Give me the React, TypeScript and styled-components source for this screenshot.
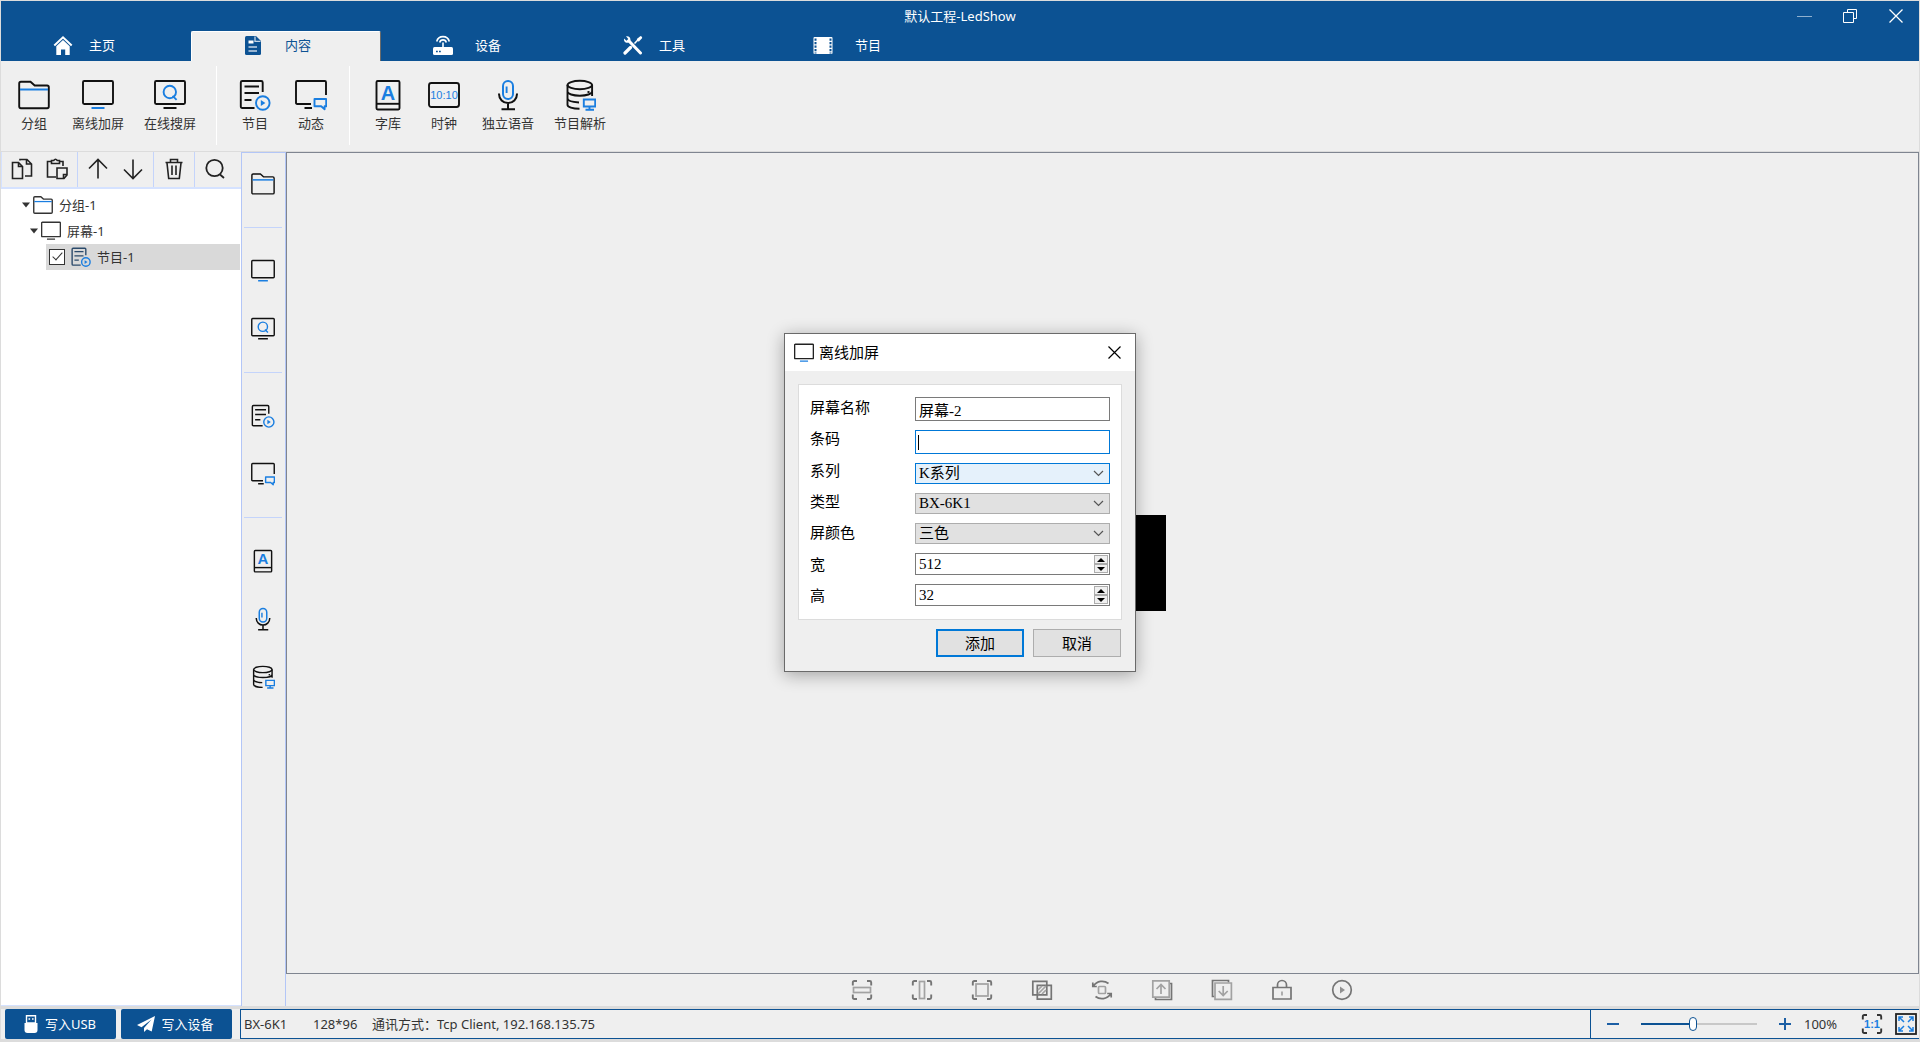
import React, { useState } from 'react';
import styled, { createGlobalStyle, css } from 'styled-components';

const UI = `"Noto Sans", "Noto Sans CJK SC", sans-serif`;
const SONG = `"Liberation Serif", "Noto Sans CJK SC", serif`;
const BLUE = '#0c5293';
const ACCENT = '#1a7ee0';
const FACE = '#efefef';

const GlobalStyle = createGlobalStyle`
  *, *::before, *::after { box-sizing: border-box; }
  body { margin: 0; background: ${FACE}; font-family: ${UI}; font-size: 13px; color: #333; }
  button, input, select { font: inherit; color: inherit; margin: 0; }
  button { padding: 0; border: 0; background: none; }
  svg { display: block; flex: none; }
`;

/* ---------- layout ---------- */

const Shell = styled.div`
  display: flex;
  flex-direction: column;
  min-height: 100vh;
  border: 1px solid #dcdcdc;
  border-bottom-width: 3px;
  background: ${FACE};
`;

const Header = styled.header`
  background: ${BLUE};
  color: #fff;
`;

const TitleBar = styled.div`
  display: grid;
  grid-template-columns: 1fr auto 1fr;
  align-items: center;
  height: 30px;
`;

const AppTitle = styled.h1`
  grid-column: 2;
  margin: 0;
  font-size: 13px;
  font-weight: 400;
  line-height: 30px;
`;

const WindowButtons = styled.div`
  display: flex;
  justify-content: flex-end;
`;

const WindowButton = styled.button`
  display: flex;
  align-items: center;
  justify-content: center;
  width: 46px;
  height: 30px;
`;

const TabStrip = styled.nav`
  display: flex;
`;

const Tab = styled.button<{ $active?: boolean; $tight?: boolean }>`
  display: flex;
  align-items: center;
  gap: ${p => (p.$tight ? 16 : 22)}px;
  width: 190px;
  height: 30px;
  padding: 0 0 2px 52px;
  ${p => p.$active && css`
    padding: 0 0 3px 51px;
    background: ${FACE};
    color: ${BLUE};
    border: solid #fff;
    border-width: 1px 0 0 1px;
    border-right: 1px solid #6b6b6b;
    border-radius: 2px 2px 0 0;
  `}
`;

const TabName = styled.span`
  padding-bottom: 2px;
`;

const Ribbon = styled.div`
  display: flex;
  height: 91px;
  padding: 5px 5px 6px;
  border-bottom: 1px solid #dcdcdc;
`;

const RibbonButton = styled.button`
  display: flex;
  flex-direction: column;
  align-items: center;
  gap: 2px;
  min-width: 56px;
  padding: 13px 10px 0;
  line-height: 20px;
`;

const RibbonRule = styled.div`
  width: 1px;
  margin: 0 10px;
  background: #fff;
`;

const Workspace = styled.main`
  display: flex;
  flex: 1;
`;

const Sidebar = styled.aside`
  display: flex;
  flex-direction: column;
  width: 240px;
  background: #fff;
  border-bottom: 1px solid #d5e2ff;
`;

const SideTools = styled.div`
  display: flex;
  height: 37px;
  background: ${FACE};
  border-left: 1px solid #d5e2ff;
  border-bottom: 2px solid #d5e2ff;
`;

const ToolGroup = styled.div`
  display: flex;
  align-items: center;
  gap: 11px;
  padding: 0 8px 2px;
  & + & { border-left: 1px solid #c4d4fb; }
`;

const ToolButton = styled.button`
  width: 24px;
  height: 24px;
`;

const Tree = styled.ul`
  list-style: none;
  margin: 0;
  padding: 3px 1px 0 0;
`;

const TreeRow = styled.li<{ $indent: number; $selected?: boolean }>`
  display: flex;
  align-items: center;
  height: 26px;
  margin-left: ${p => p.$indent}px;
  padding-left: ${p => (p.$selected ? 3 : 0)}px;
  background: ${p => (p.$selected ? '#d9d9d9' : 'transparent')};
  svg + svg { margin-left: 3px; }
  input + svg { margin-left: 6px; }
`;

const nodeName = css`
  margin-left: 6px;
  padding-bottom: 2px;
`;

const NodeName = styled.span`${nodeName}`;
const NodeLabel = styled.label`${nodeName}`;

const Check = styled.input`
  appearance: none;
  width: 16px;
  height: 16px;
  border: 1px solid #333;
  background: #fff;
  &:checked::after {
    content: '';
    display: block;
    width: 5px;
    height: 10px;
    margin: 0 auto;
    border: solid #333;
    border-width: 0 1px 1px 0;
    transform: rotate(42deg);
  }
`;

const Rail = styled.div`
  display: flex;
  flex-direction: column;
  width: 45px;
  padding-top: 2px;
  border: 1px solid #b3c6f7;
  border-bottom: 0;
`;

const RailGroup = styled.div`
  display: flex;
  flex-direction: column;
  margin: 0 3px 0 2px;
  & + & {
    margin-top: 14px;
    padding-top: 14px;
    border-top: 1px solid #c4d4fb;
  }
`;

const RailButton = styled.button`
  display: flex;
  align-items: center;
  justify-content: center;
  height: 58px;
`;

const Stage = styled.section`
  display: flex;
  flex: 1;
  flex-direction: column;
`;

const Canvas = styled.div`
  display: flex;
  flex: 1;
  align-items: center;
  justify-content: center;
  padding-right: 1px;
  border: 1px solid #7f8590;
`;

const LedScreen = styled.div`
  width: 128px;
  height: 96px;
  background: #000;
`;

const ArrangeBar = styled.div`
  display: flex;
  justify-content: center;
  gap: 38px;
  height: 32px;
  padding-right: 1px;
`;

const ArrangeButton = styled.button`
  display: flex;
  align-items: center;
  justify-content: center;
  width: 22px;
`;

const Footer = styled.footer`
  display: flex;
  height: 33px;
  padding-left: 4px;
  border-top: 3px solid #dcdcdc;
`;

const WriteButtons = styled.div`
  display: flex;
  gap: 5px;
  width: 235px;
`;

const WriteButton = styled.button`
  display: flex;
  align-items: center;
  justify-content: center;
  gap: 6px;
  width: 111px;
  height: 30px;
  padding-right: 2px;
  border-radius: 2px;
  background: ${BLUE};
  color: #fff;
`;

const WriteName = styled.span`
  padding-bottom: 2px;
`;

const Status = styled.div`
  display: flex;
  flex: 1;
  align-items: center;
  padding: 0 2px 0 3px;
  border: 1px solid ${BLUE};
  border-right: 0;
`;

const StatusItem = styled.span<{ $width?: number }>`
  width: ${p => (p.$width ? `${p.$width}px` : 'auto')};
  line-height: 18px;
  padding-bottom: 1px;
  white-space: nowrap;
`;

const Zoom = styled.div`
  display: flex;
  align-items: center;
  height: 28px;
  margin-left: auto;
  padding-left: 16px;
  border-left: 1px solid ${BLUE};
`;

const ZoomSlider = styled.input`
  appearance: none;
  width: 116px;
  height: 14px;
  margin: 0 22px;
  background: linear-gradient(to right, ${BLUE} 44%, #c8c8c8 44%) center / 100% 2px no-repeat;
  &::-webkit-slider-thumb {
    appearance: none;
    width: 8px;
    height: 14px;
    border: 1px solid ${BLUE};
    border-radius: 4px;
    background: #fff;
  }
`;

const ZoomValue = styled.output`
  width: 57px;
  margin-left: 13px;
`;

const ViewButton = styled.button`
  width: 22px;
  height: 22px;
  & + & { margin-left: 12px; }
`;

/* ---------- dialog ---------- */

const Overlay = styled.div`
  position: absolute;
  inset: 0;
  display: flex;
  align-items: flex-start;
  justify-content: center;
  padding-top: 333px;
`;

const DialogBox = styled.div`
  width: 352px;
  border: 1px solid #6a6a6a;
  background: ${FACE};
  box-shadow: 0 3px 16px rgba(0, 0, 0, 0.32);
  font-family: ${SONG};
  font-size: 15px;
  color: #000;
`;

const DialogHeader = styled.div`
  display: flex;
  align-items: center;
  gap: 5px;
  height: 37px;
  padding: 0 6px 0 9px;
  background: #fff;
`;

const DialogTitle = styled.h2`
  flex: 1;
  margin: 0;
  padding-bottom: 2px;
  font-family: ${UI};
  font-size: 15px;
  font-weight: 400;
`;

const CloseButton = styled.button`
  display: flex;
  align-items: center;
  justify-content: center;
  width: 30px;
  height: 30px;
`;

const DialogForm = styled.form`
  padding: 13px 13px 14px;
`;

const Fields = styled.div`
  display: grid;
  grid-template-columns: 1fr 195px;
  padding: 12px 11px 13px;
  border: 1px solid #dcdcdc;
  background: #fff;
`;

const Labels = styled.div`
  display: flex;
  flex-direction: column;
  justify-content: space-between;
  padding-top: 1px;
  line-height: 20px;
`;

const Controls = styled.div`
  display: flex;
  flex-direction: column;
  gap: 9px;
`;

const TextField = styled.div<{ $active?: boolean }>`
  position: relative;
  height: 24px;
  border: 1px solid ${p => (p.$active ? '#0078d7' : '#7a7a7a')};
  ${p => p.$active && css`
    &::after {
      content: '';
      position: absolute;
      left: 2px;
      top: 4px;
      width: 1px;
      height: 15px;
      background: #000;
    }
  `}
`;

const Entry = styled.input`
  display: block;
  width: 100%;
  height: 100%;
  padding: 0 3px;
  border: 0;
  outline: 0;
  background: none;
  caret-color: transparent;
  appearance: textfield;
  &::-webkit-inner-spin-button { appearance: none; }
`;

const Picker = styled.div<{ $active?: boolean }>`
  display: grid;
  align-items: center;
  height: 21px;
  border: 1px solid ${p => (p.$active ? '#0078d7' : '#adadad')};
  background: ${p => (p.$active ? '#e5f1fb' : '#e1e1e1')};
  select, svg { grid-area: 1 / 1; }
  svg { justify-self: end; margin-right: 5px; pointer-events: none; }
`;

const Choice = styled.select`
  appearance: none;
  width: 100%;
  height: 19px;
  padding: 0 3px;
  border: 0;
  outline: 0;
  background: none;
  line-height: 19px;
`;

const NumberField = styled.div`
  display: flex;
  height: 22px;
  padding-right: 1px;
  border: 1px solid #7a7a7a;
`;

const Steppers = styled.div`
  display: flex;
  flex-direction: column;
  padding: 1px 0;
`;

const Stepper = styled.button`
  display: flex;
  align-items: center;
  justify-content: center;
  width: 14px;
  height: 9px;
  border: 1px solid #adadad;
  background: #f0f0f0;
`;

const Actions = styled.div`
  display: flex;
  justify-content: flex-end;
  gap: 9px;
  margin-top: 9px;
  padding-right: 1px;
`;

const ActionButton = styled.button<{ $primary?: boolean }>`
  width: 88px;
  height: 28px;
  padding-bottom: 2px;
  border: ${p => (p.$primary ? '2px solid #0078d7' : '1px solid #adadad')};
  background: #e1e1e1;
`;

/* ---------- icons ---------- */

type IconProps = { size?: number; ink?: string; accent?: string };

const Big = ({ size = 32, ink = '#111', children }: IconProps & { children: React.ReactNode }) => (
  <svg width={size} height={size} viewBox="0 0 32 32" fill="none" stroke={ink} strokeWidth={size < 24 ? 2.2 : 1.9} aria-hidden="true">
    {children}
  </svg>
);

const FolderIcon = (p: IconProps) => (
  <Big {...p}>
    <path d="M1.2 27.5V4.4q0-1.7 1.7-1.7h9.6l4.2 3.8h12.4q1.7 0 1.7 1.7v19.3q0 1.7-1.7 1.7H2.9q-1.7 0-1.7-1.7z" />
    <path d="M2 10.5h28" stroke={ACCENT} strokeWidth="2" />
  </Big>
);

const MonitorIcon = ({ accent = ACCENT, ...p }: IconProps) => (
  <Big {...p}>
    <rect x="1" y="2" width="30" height="23" rx="1.2" />
    <path d="M9.5 29h13" stroke={accent} strokeWidth="2" />
  </Big>
);

const SearchScreenIcon = (p: IconProps) => (
  <Big {...p}>
    <rect x="1" y="2" width="30" height="23" rx="1.2" />
    <path d="M9.5 29h13" strokeWidth="2" />
    <circle cx="15.8" cy="13" r="6.2" stroke={ACCENT} />
    <path d="M18.6 16.8l4 4" stroke={ACCENT} />
  </Big>
);

const ProgramIcon = (p: IconProps) => (
  <Big {...p}>
    <path d="M15.5 29H3.3Q1.8 29 1.8 27.5V3.5Q1.8 2 3.3 2h18.9q1.5 0 1.5 1.5V13" />
    <path d="M5.5 7.5h14.5M5.5 14h14.5M5.5 21h7" strokeWidth="2" />
    <circle cx="23.8" cy="24" r="6.8" stroke={ACCENT} />
    <path d="M21.8 21v6l4.6-3z" fill={ACCENT} stroke="none" />
  </Big>
);

const DynamicIcon = (p: IconProps) => (
  <Big {...p}>
    <path d="M16 25H2.2Q1 25 1 23.8V3.2Q1 2 2.2 2h27.6Q31 2 31 3.2V16" />
    <path d="M9.5 29h7.5" strokeWidth="2" />
    <path d="M19.5 20h11.7v7.3h-1.6v3l-3.4-3h-6.7z" stroke={ACCENT} strokeLinejoin="round" />
  </Big>
);

const Glyph = styled.text`
  font-family: "Liberation Sans", sans-serif;
  font-weight: 700;
  fill: ${ACCENT};
  stroke: none;
`;

const DigitGlyph = styled(Glyph)`
  font-weight: 400;
`;

const FontIcon = (p: IconProps) => (
  <Big {...p}>
    <rect x="4.5" y="2" width="23" height="28.5" rx="1.2" />
    <path d="M4.5 24.8h23" />
    <Glyph x="16" y="20.5" fontSize="20" textAnchor="middle">A</Glyph>
  </Big>
);

const ClockIcon = (p: IconProps) => (
  <Big {...p}>
    <rect x="1" y="4" width="30" height="24" rx="2.4" />
    <DigitGlyph x="16" y="20" fontSize="11" textAnchor="middle">10:10</DigitGlyph>
  </Big>
);

const MicIcon = (p: IconProps) => (
  <Big {...p}>
    <rect x="11" y="2" width="10" height="18" rx="5" stroke={ACCENT} strokeWidth="2" />
    <path d="M14.6 7.5v6.5" stroke={ACCENT} />
    <path d="M7 14.5v.6a9 9 0 0 0 18 0v-.6M16 24.2V30M9.5 30.2h13.5" strokeWidth="2" />
  </Big>
);

const DatabaseIcon = (p: IconProps) => (
  <Big {...p}>
    <ellipse cx="15.8" cy="6" rx="12.3" ry="4.2" />
    <path d="M3.5 6v20c0 1.8 5 3.7 12 3.8M28.1 6v11M3.5 12.5c0 2.4 5.5 4.2 12.3 4.2s12.3-1.8 12.3-4.2M3.5 19.3c0 2 4 3.8 11.5 4.2" />
    <path d="M23.5 13h2" />
    <path d="M19.8 20.5h11.4v7H19.8zM25.5 27.5v3M21.5 30.7h8.5" stroke={ACCENT} />
  </Big>
);

const Line = ({ children }: { children: React.ReactNode }) => (
  <svg width="24" height="24" viewBox="0 0 24 24" fill="none" stroke="#222" strokeWidth="1.6" aria-hidden="true">
    {children}
  </svg>
);

const CopyIcon = () => (
  <Line>
    <path d="M2.5 5.500h6l4 4v12h-10zM8.500 5.500v4h4M10 3.500V2.500h7l4.500 4.500v12H15M16.500 2.500V7h5" />
  </Line>
);

const PasteIcon = () => (
  <Line>
    <path d="M11 20H2.500V4.500h4M14.500 4.500h3.500V9" />
    <path d="M6.500 3.500h2.200q1.800-2.500 3.600 0h2.200v3h-8z" />
    <path d="M12 11h10v7l-3 3.500h-7zM22 17.500h-3.500v4" />
  </Line>
);

const UpIcon = () => <Line><path d="M12 21.500V2.800M3 11.500l9-9 9 9" /></Line>;
const DownIcon = () => <Line><path d="M12 2.500v18.700M3 12.500l9 9 9-9" /></Line>;

const TrashIcon = () => (
  <Line>
    <path d="M3.500 5.500h17M8.500 5V2.500h7V5M5 6l1.700 15.500h10.600L19 6M10 8.500v9.500M14 8.500v9.500" />
  </Line>
);

const FindIcon = () => (
  <Line><circle cx="11.500" cy="11" r="8.200" strokeWidth="1.800" /><path d="M17 17.500l4 3.500" strokeWidth="1.800" /></Line>
);

const Caret = () => (
  <svg width="8" height="6" viewBox="0 0 8 6" aria-hidden="true"><path d="M0 .5h8L4 5.500z" fill="#333" /></svg>
);

const HomeIcon = () => (
  <svg width="20" height="20" viewBox="0 0 20 20" aria-hidden="true">
    <path d="M1.300 10.500L10 2.300l8.700 8.200" fill="none" stroke="#fff" strokeWidth="2" />
    <path d="M3.300 11.300L10 5l6.700 6.300V20h-4.500v-5.500H8V20H3.300z" fill="#fff" />
  </svg>
);

const PageIcon = () => (
  <svg width="20" height="20" viewBox="0 0 20 20" aria-hidden="true">
    <path d="M3.500 1h9.500l5 5v12.500q0 1.500-1.500 1.500h-13Q2 20 2 18.500v-16Q2 1 3.500 1z" fill={BLUE} />
    <path d="M12 1.500v4.800h5.500M5.500 12h8.500M5.500 16h8.500" fill="none" stroke="#c5d5e6" strokeWidth="1.300" />
    <path d="M5.500 5.500h5v3h-5z" fill="#fff" />
  </svg>
);

const RouterIcon = () => (
  <svg width="20" height="20" viewBox="0 0 20 20" fill="none" stroke="#fff" strokeWidth="1.600" aria-hidden="true">
    <path d="M3.700 6.500a6.500 6.500 0 0 1 12.600 0M6.700 7.500a3.400 3.400 0 0 1 6.600 0M10 7.500v5" />
    <path d="M1.500 12h17q1.500 0 1.500 1.500v5q0 1.500-1.500 1.500h-17Q0 20 0 18.500v-5Q0 12 1.500 12z" fill="#fff" stroke="none" />
    <path d="M3 16.500h1.800M6 16.500h1.800" stroke={BLUE} />
  </svg>
);

const ToolsIcon = () => (
  <svg width="20" height="20" viewBox="0 0 20 20" fill="none" stroke="#fff" aria-hidden="true">
    <path d="M6 6l11.500 12" strokeWidth="3" strokeLinecap="round" />
    <path d="M3 1.200q4.500-.5 4.500 4-1 3.300-4 2.500Q.5 7 1 3.500l2.500 2.300 1.800-1.800z" fill="#fff" stroke="none" />
    <path d="M2 18l5.500-5.500" strokeWidth="3.200" strokeLinecap="round" />
    <path d="M11.500 8.500l3.500-3.700" strokeWidth="1.600" />
    <path d="M13.800 4l3.800-3q1.800.6 1.600 2L16 6.500q-2 .2-2.200-2.500z" fill="#fff" stroke="none" />
  </svg>
);

const FilmIcon = () => (
  <svg width="20" height="20" viewBox="0 0 20 20" aria-hidden="true">
    <rect x=".5" y="2" width="19" height="17" rx="1" fill="#fff" />
    <path d="M2.500 3.500v15M17.500 3.500v15" stroke={BLUE} strokeWidth="2" strokeDasharray="2.200 1.300" />
  </svg>
);

const UsbIcon = () => (
  <svg width="16" height="20" viewBox="0 0 16 20" aria-hidden="true">
    <path d="M3.500 1.800h9V9h-9z" fill={BLUE} stroke="#fff" strokeWidth="1.400" />
    <path d="M5.500 5h1.600M9 5h1.600" stroke="#fff" strokeWidth="1.500" />
    <path d="M1.500 9h13v7q0 3-3 3h-7q-3 0-3-3z" fill="#fff" />
  </svg>
);

const PlaneIcon = () => (
  <svg width="18" height="18" viewBox="0 0 18 18" fill="#fff" aria-hidden="true">
    <path d="M18 1L0 10l4.500 2.200L14.500 4.500 7 13v4l3-2.700 4.700 2.200z" />
  </svg>
);

const Arrange = ({ children }: { children: React.ReactNode }) => (
  <svg width="22" height="22" viewBox="-1 -1 22 22" fill="none" stroke="#a2a2a2" strokeWidth="1.700" aria-hidden="true">
    {children}
  </svg>
);

const Corners = ({ ink = '#757575' }) => (
  <path d="M.8 5.500v-3Q.8 1 2.300 1H5M15 1h2.700q1.500 0 1.500 1.500v3M19.200 14.500v3q0 1.500-1.500 1.500H15M5 19H2.300Q.8 19 .8 17.500v-3" stroke={ink} strokeWidth="1.900" />
);

const arrangeTools: { name: string; icon: React.ReactNode }[] = [
  { name: '水平适应', icon: <><Corners /><rect x="1.500" y="7.500" width="17" height="5" /></> },
  { name: '垂直适应', icon: <><Corners /><rect x="7.500" y="1.500" width="5" height="17" /></> },
  { name: '全屏适应', icon: <><Corners /><rect x="4" y="4" width="12" height="12" /></> },
  {
    name: '叠放',
    icon: (
      <>
        <path d="M.8 1.300h14v13.500H.8zM5.300 5.300h14v13.900h-14z" stroke="#757575" />
        <path d="M6 10l4-4M6 14l8-8M10 14l4-4" />
      </>
    ),
  },
  {
    name: '旋转',
    icon: (
      <>
        <rect x="6.500" y="6.500" width="7" height="7" rx="1" />
        <path d="M.8 2.500v4h4M1.200 6.200C5 .5 12 0 16.500 3.500M19.200 17.500v-4h-4M18.800 13.800C15 19.500 8 20 3.500 16.500" stroke="#757575" />
      </>
    ),
  },
  {
    name: '上移一层',
    icon: <><path d="M17.500 3.500h2v16h-16v-2" stroke="#757575" /><path d="M.8.8h16.400v16.400H.8zM9 14V4.500M4.500 9L9 4.500 13.500 9" /></>,
  },
  {
    name: '下移一层',
    icon: <><path d="M2.500 16.500h-2v-16h16v2" stroke="#757575" /><path d="M3 3h16.400v16.400H3zM11.200 6v9.500M6.700 11l4.500 4.500 4.500-4.500" /></>,
  },
  {
    name: '锁定',
    icon: <><path d="M1 7.500h18V19H1zM5.500 7.500V5a4.500 4.500 0 0 1 9 0v2.500" stroke="#757575" /><path d="M10 11.500v4" /></>,
  },
  {
    name: '播放',
    icon: <><circle cx="10" cy="10" r="9.300" stroke="#757575" /><path d="M8 6.500v7l5-3.500z" fill="#909090" stroke="none" /></>,
  },
];

const Sign = ({ plus }: { plus?: boolean }) => (
  <svg width="12" height="12" viewBox="0 0 12 12" stroke="#1c5fa5" strokeWidth="2" aria-hidden="true">
    <path d={plus ? 'M0 6h12M6 0v12' : 'M0 6h12'} />
  </svg>
);

const ActualSizeIcon = () => (
  <svg width="22" height="22" viewBox="-1 -1 22 22" fill="none" aria-hidden="true">
    <Corners ink="#333" />
    <Glyph x="10" y="13.800" fontSize="11" textAnchor="middle">1:1</Glyph>
  </svg>
);

const FullscreenIcon = () => (
  <svg width="22" height="22" viewBox="0 0 22 22" fill="none" aria-hidden="true">
    <rect x="1" y="1" width="20" height="20" stroke="#222" strokeWidth="1.800" />
    <path d="M4 8V4h4M4 4l5 5M14 4h4v4M18 4l-5 5M18 14v4h-4M18 18l-5-5M8 18H4v-4M4 18l5-5" stroke={ACCENT} strokeWidth="1.500" />
  </svg>
);

const Chevron = () => (
  <svg width="11" height="7" viewBox="0 0 11 7" aria-hidden="true">
    <path d="M1 1l4.500 4.500L10 1" fill="none" stroke="#555" strokeWidth="1.200" />
  </svg>
);

const StepArrow = ({ down }: { down?: boolean }) => (
  <svg width="8" height="4" viewBox="0 0 8 4" aria-hidden="true">
    <path d={down ? 'M0 0h8L4 4z' : 'M0 4h8L4 0z'} fill="#000" />
  </svg>
);

/* ---------- data ---------- */

const tabs = [
  { name: '主页', icon: <HomeIcon />, tight: true },
  { name: '内容', icon: <PageIcon />, active: true },
  { name: '设备', icon: <RouterIcon /> },
  { name: '工具', icon: <ToolsIcon />, tight: true },
  { name: '节目', icon: <FilmIcon /> },
];

type Tool = { name: string; Icon: (p: IconProps) => React.ReactElement; ribbonOnly?: boolean };

const ribbon: Tool[][] = [
  [
    { name: '分组', Icon: FolderIcon },
    { name: '离线加屏', Icon: MonitorIcon },
    { name: '在线搜屏', Icon: SearchScreenIcon },
  ],
  [
    { name: '节目', Icon: ProgramIcon },
    { name: '动态', Icon: DynamicIcon },
  ],
  [
    { name: '字库', Icon: FontIcon },
    { name: '时钟', Icon: ClockIcon, ribbonOnly: true },
    { name: '独立语音', Icon: MicIcon },
    { name: '节目解析', Icon: DatabaseIcon },
  ],
];

const rail: Tool[][] = [
  ribbon[0].slice(0, 1),
  ribbon[0].slice(1),
  ribbon[1],
  ribbon[2].filter(t => !t.ribbonOnly),
];

const sideTools = [
  [{ name: '复制', icon: <CopyIcon /> }, { name: '粘贴', icon: <PasteIcon /> }],
  [{ name: '上移', icon: <UpIcon /> }, { name: '下移', icon: <DownIcon /> }],
  [{ name: '删除', icon: <TrashIcon /> }],
  [{ name: '查找', icon: <FindIcon /> }],
];

/* ---------- pieces ---------- */

function SelectField({ id, options, active }: { id: string; options: string[]; active?: boolean }) {
  return (
    <Picker $active={active}>
      <Choice id={id} defaultValue={options[0]}>
        {options.map(o => <option key={o}>{o}</option>)}
      </Choice>
      <Chevron />
    </Picker>
  );
}

function SpinField({ id, initial }: { id: string; initial: number }) {
  const [value, setValue] = useState(initial);
  return (
    <NumberField>
      <Entry id={id} type="number" value={value} onChange={e => setValue(Number(e.target.value))} />
      <Steppers>
        <Stepper type="button" aria-label="增加" onClick={() => setValue(v => v + 1)}><StepArrow /></Stepper>
        <Stepper type="button" aria-label="减少" onClick={() => setValue(v => v - 1)}><StepArrow down /></Stepper>
      </Steppers>
    </NumberField>
  );
}

function AddScreenDialog() {
  return (
    <Overlay>
      <DialogBox role="dialog" aria-labelledby="dialog-title">
        <DialogHeader>
          <MonitorIcon size={20} ink="#222" />
          <DialogTitle id="dialog-title">离线加屏</DialogTitle>
          <CloseButton type="button" aria-label="关闭">
            <svg width="13" height="13" viewBox="0 0 13 13" stroke="#000" strokeWidth="1.200" aria-hidden="true">
              <path d="M.5.5l12 12M12.500.5l-12 12" />
            </svg>
          </CloseButton>
        </DialogHeader>
        <DialogForm onSubmit={e => e.preventDefault()}>
          <Fields>
            <Labels>
              <label htmlFor="name">屏幕名称</label>
              <label htmlFor="barcode">条码</label>
              <label htmlFor="series">系列</label>
              <label htmlFor="type">类型</label>
              <label htmlFor="color">屏颜色</label>
              <label htmlFor="width">宽</label>
              <label htmlFor="height">高</label>
            </Labels>
            <Controls>
              <TextField><Entry id="name" defaultValue="屏幕-2" /></TextField>
              <TextField $active><Entry id="barcode" /></TextField>
              <SelectField id="series" options={['K系列']} active />
              <SelectField id="type" options={['BX-6K1']} />
              <SelectField id="color" options={['三色']} />
              <SpinField id="width" initial={512} />
              <SpinField id="height" initial={32} />
            </Controls>
          </Fields>
          <Actions>
            <ActionButton type="submit" $primary>添加</ActionButton>
            <ActionButton type="button">取消</ActionButton>
          </Actions>
        </DialogForm>
      </DialogBox>
    </Overlay>
  );
}

export default function App() {
  return (
    <>
      <GlobalStyle />
      <Shell>
        <Header>
          <TitleBar>
            <AppTitle>默认工程-LedShow</AppTitle>
            <WindowButtons>
              <WindowButton aria-label="最小化">
                <svg width="15" height="15" viewBox="0 0 15 15"><path d="M0 7.500h15" stroke="#8fb0cf" /></svg>
              </WindowButton>
              <WindowButton aria-label="还原">
                <svg width="14" height="14" viewBox="0 0 14 14" fill="none" stroke="#fff">
                  <path d="M.5 3.500h10v10H.5zM4.500 3V.5h9v9H11" />
                </svg>
              </WindowButton>
              <WindowButton aria-label="关闭窗口">
                <svg width="14" height="14" viewBox="0 0 14 14" stroke="#fff" strokeWidth="1.300">
                  <path d="M.5.5l13 13M13.500.5l-13 13" />
                </svg>
              </WindowButton>
            </WindowButtons>
          </TitleBar>
          <TabStrip>
            {tabs.map(t => (
              <Tab key={t.name} $active={t.active} $tight={t.tight}>{t.icon}<TabName>{t.name}</TabName></Tab>
            ))}
          </TabStrip>
        </Header>

        <Ribbon>
          {ribbon.map((group, i) => (
            <React.Fragment key={i}>
              {i > 0 && <RibbonRule />}
              {group.map(({ name, Icon }) => (
                <RibbonButton key={name}><Icon />{name}</RibbonButton>
              ))}
            </React.Fragment>
          ))}
        </Ribbon>

        <Workspace>
          <Sidebar>
            <SideTools>
              {sideTools.map((group, i) => (
                <ToolGroup key={i}>
                  {group.map(t => <ToolButton key={t.name} aria-label={t.name}>{t.icon}</ToolButton>)}
                </ToolGroup>
              ))}
            </SideTools>
            <Tree>
              <TreeRow $indent={21}><Caret /><FolderIcon size={20} ink="#333" /><NodeName>分组-1</NodeName></TreeRow>
              <TreeRow $indent={29}><Caret /><MonitorIcon size={20} ink="#333" accent="#333" /><NodeName>屏幕-1</NodeName></TreeRow>
              <TreeRow $indent={45} $selected>
                <Check type="checkbox" id="program-1" defaultChecked />
                <ProgramIcon size={20} ink="#2b4a6b" />
                <NodeLabel htmlFor="program-1">节目-1</NodeLabel>
              </TreeRow>
            </Tree>
          </Sidebar>

          <Rail>
            {rail.map((group, i) => (
              <RailGroup key={i}>
                {group.map(({ name, Icon }) => (
                  <RailButton key={name} aria-label={name}><Icon size={24} /></RailButton>
                ))}
              </RailGroup>
            ))}
          </Rail>

          <Stage>
            <Canvas><LedScreen /></Canvas>
            <ArrangeBar>
              {arrangeTools.map(t => (
                <ArrangeButton key={t.name} aria-label={t.name}><Arrange>{t.icon}</Arrange></ArrangeButton>
              ))}
            </ArrangeBar>
          </Stage>
        </Workspace>

        <Footer>
          <WriteButtons>
            <WriteButton><UsbIcon /><WriteName>写入USB</WriteName></WriteButton>
            <WriteButton><PlaneIcon /><WriteName>写入设备</WriteName></WriteButton>
          </WriteButtons>
          <Status>
            <StatusItem $width={69}>BX-6K1</StatusItem>
            <StatusItem $width={59}>128*96</StatusItem>
            <StatusItem>通讯方式：Tcp Client, 192.168.135.75</StatusItem>
            <Zoom>
              <button aria-label="缩小"><Sign /></button>
              <ZoomSlider type="range" min={0} max={100} defaultValue={44} aria-label="缩放" />
              <button aria-label="放大"><Sign plus /></button>
              <ZoomValue>100%</ZoomValue>
              <ViewButton aria-label="实际大小"><ActualSizeIcon /></ViewButton>
              <ViewButton aria-label="全屏"><FullscreenIcon /></ViewButton>
            </Zoom>
          </Status>
        </Footer>
      </Shell>
      <AddScreenDialog />
    </>
  );
}
